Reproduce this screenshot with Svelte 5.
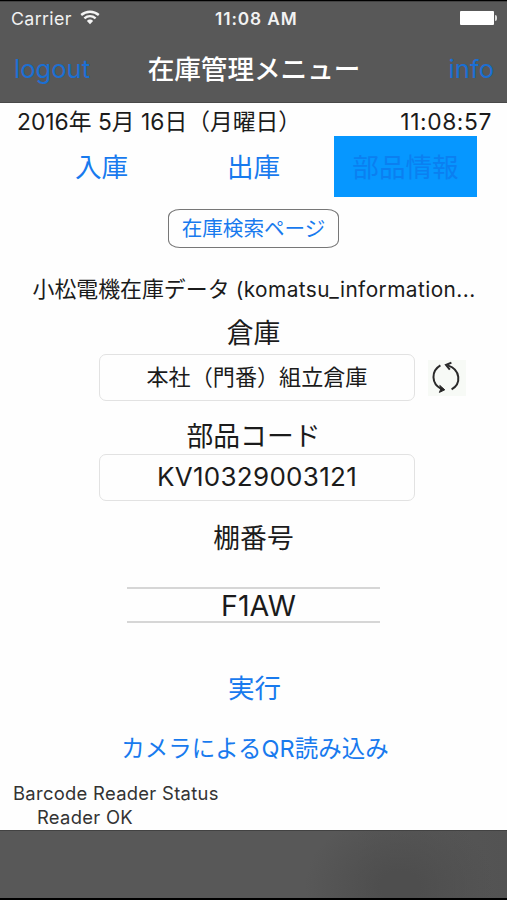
<script lang="ts">
	type Tab = { id: string; label: string };

	const tabs: Tab[] = [
		{ id: 'in', label: '入庫' },
		{ id: 'out', label: '出庫' },
		{ id: 'parts', label: '部品情報' }
	];

	let activeTab = 'parts';
	let partCode = 'KV10329003121';
	let shelf = 'F1AW';
</script>

<div class="screen">
	<header>
		<div class="status-bar">
			<span class="carrier">Carrier</span>
			<svg class="wifi" viewBox="0 0 20 15" width="20" height="15">
				<path d="M1.2 5 C6.3 0.6 13.7 0.6 18.8 5" />
				<path d="M4.4 8.4 C7.8 5.5 12.2 5.5 15.6 8.4" />
				<path class="dot" d="M6.9 11 C8.7 9.1 11.3 9.1 13.1 11 L10 14.2 Z" />
			</svg>
			<span class="clock">11:08 AM</span>
			<span class="battery"></span>
		</div>
		<nav>
			<button class="nav-item logout">logout</button>
			<h1>在庫管理メニュー</h1>
			<button class="nav-item info">info</button>
		</nav>
	</header>

	<main>
		<div class="datetime">
			<span class="date">2016年 5月 16日（月曜日）</span>
			<span class="time">11:08:57</span>
		</div>

		<div class="tabs">
			{#each tabs as tab}
				<button class="tab {tab.id}" class:active={activeTab === tab.id} on:click={() => (activeTab = tab.id)}>
					{tab.label}
				</button>
			{/each}
		</div>

		<button class="search">在庫検索ページ</button>

		<div class="source">小松電機在庫データ <span>(komatsu_information...</span></div>

		<div class="label warehouse-label">倉庫</div>
		<div class="warehouse">
			<div class="field">本社（門番）組立倉庫</div>
			<button class="refresh" aria-label="更新">
				<svg viewBox="0 0 38 36" width="38" height="36">
					<path d="M12.4 5.4 C3 11 3 23.5 13.4 29" />
					<path d="M23.6 29.4 C33.4 24 32.8 9.6 19.8 5.4" />
					<path class="arrow" d="M23.4 2.6 L18 5 L21.8 9.6" />
					<path class="head" d="M16.8 29.8 L11.4 32.4 L12.8 29 L11.8 25.4 Z" />
				</svg>
			</button>
		</div>

		<div class="label code-label">部品コード</div>
		<div class="field code">{partCode}</div>

		<div class="label shelf-label">棚番号</div>
		<div class="picker">{shelf}</div>

		<button class="run">実行</button>
		<button class="camera">カメラによる<span>QR</span>読み込み</button>

		<div class="reader">
			<div>Barcode Reader Status</div>
			<div class="reader-state">Reader OK</div>
		</div>
	</main>

	<footer></footer>
</div>

<style>
	:global(body) {
		margin: 0;
		background: #000;
	}

	.screen {
		width: 507px;
		height: 900px;
		box-sizing: border-box;
		padding-top: 1px;
		display: flex;
		flex-direction: column;
		overflow: hidden;
		background: #000;
		color: #1b1b1b;
		font-family: Inter, 'Noto Sans CJK JP', sans-serif;
		white-space: nowrap;
	}

	button {
		display: block;
		margin: 0;
		padding: 0;
		border: none;
		background: none;
		font-family: inherit;
		color: #187aee;
		white-space: nowrap;
	}

	header {
		flex: none;
		height: 102px;
		box-sizing: border-box;
		background: #585858;
		border-top: 1px solid #424242;
		border-bottom: 1px solid #484848;
	}

	.status-bar {
		display: flex;
		align-items: center;
		height: 33px;
		padding: 0 9px 0 11px;
		color: #f2f2f2;
	}

	.carrier {
		width: 69px;
		font-size: 17.8px;
		letter-spacing: 0.35px;
	}

	.wifi {
		margin-top: -2px;
	}

	.wifi path {
		fill: none;
		stroke: #f4f4f4;
		stroke-width: 2.4;
	}

	.wifi .dot {
		fill: #f4f4f4;
		stroke: none;
	}

	.clock {
		flex: 1;
		margin-left: 115px;
		font-size: 17.3px;
		font-weight: 600;
		letter-spacing: 0.9px;
	}

	.battery {
		position: relative;
		width: 34px;
		height: 14px;
		margin-top: -2px;
		margin-right: 4px;
		background: #fff;
		border-radius: 1px;
	}

	.battery::after {
		content: '';
		position: absolute;
		left: 35px;
		top: 4px;
		width: 2px;
		height: 6px;
		border-radius: 0 2px 2px 0;
		background: #ddd;
	}

	nav {
		display: grid;
		grid-template-columns: 110px 1fr 110px;
		align-items: center;
		height: 67px;
		padding: 0 13px 0 14px;
	}

	.nav-item {
		font-size: 25.6px;
		line-height: 68px;
		color: #1b6fd3;
	}

	.logout {
		text-align: left;
	}

	.info {
		text-align: right;
	}

	h1 {
		margin: 0;
		text-align: center;
		font-size: 26.6px;
		font-weight: 500;
		line-height: 66px;
		color: #fff;
	}

	main {
		flex: none;
		height: 727px;
		display: flex;
		flex-direction: column;
		align-items: center;
		background: #fefefe;
	}

	.datetime {
		align-self: stretch;
		display: flex;
		justify-content: space-between;
		height: 33px;
		padding: 0 16px 0 17px;
		font-size: 22.8px;
		line-height: 38px;
	}

	.time {
		letter-spacing: 0.6px;
		margin-right: -1px;
	}

	.tabs {
		align-self: stretch;
		display: flex;
		height: 61px;
		padding-left: 30px;
	}

	.tab {
		width: 143px;
		margin-right: 9px;
		font-size: 26.6px;
		line-height: 63px;
	}

	.tab.parts {
		margin-right: 0;
	}

	.active {
		background: #0697ff;
		color: #0b7ff0;
	}

	.search {
		width: 171px;
		height: 39px;
		margin-top: 12px;
		border: 1px solid #777;
		border-radius: 12px / 8px;
		font-size: 20.6px;
		line-height: 37px;
	}

	.source {
		width: 442px;
		height: 40px;
		margin-top: 22px;
		font-size: 21.9px;
		line-height: 38px;
	}

	.source span {
		font-size: 20.8px;
		letter-spacing: 0.44px;
	}

	.label {
		font-size: 26.8px;
		line-height: 40px;
		height: 38px;
	}

	.warehouse-label {
		margin-top: 3px;
	}

	.field {
		width: 316px;
		height: 47px;
		box-sizing: border-box;
		border: 1.5px solid #e2e2e2;
		border-radius: 7px;
		text-align: center;
		font-size: 22.1px;
		line-height: 45px;
	}

	.warehouse {
		align-self: stretch;
		display: flex;
		align-items: center;
		gap: 13px;
		padding-left: 99px;
		margin-top: 3px;
	}

	.refresh {
		width: 38px;
		height: 36px;
		background: #f7faf6;
	}

	.refresh svg {
		display: block;
	}

	.refresh path {
		fill: none;
		stroke: #2a2a2a;
		stroke-width: 2;
	}

	.refresh .head {
		fill: #222;
		stroke-width: 1;
	}

	.code-label {
		margin-top: 15px;
	}

	.field.code {
		align-self: flex-start;
		margin-left: 99px;
		font-size: 26px;
		line-height: 43px;
		letter-spacing: 0.3px;
	}

	.shelf-label {
		margin-top: 17px;
	}

	.picker {
		width: 253px;
		height: 36px;
		box-sizing: border-box;
		margin-top: 31px;
		padding-left: 10px;
		border-top: 2px solid #d6d6d6;
		border-bottom: 2px solid #d6d6d6;
		text-align: center;
		font-size: 28.6px;
		line-height: 34px;
	}

	.run {
		height: 40px;
		margin-top: 45px;
		padding-left: 2px;
		font-size: 26.5px;
		line-height: 40px;
	}

	.camera {
		height: 36px;
		margin-top: 22px;
		padding-left: 3px;
		font-size: 23.5px;
		line-height: 38px;
	}

	.reader {
		align-self: stretch;
		margin-top: 15px;
		padding-left: 13px;
		font-size: 18.4px;
		line-height: 24px;
		letter-spacing: 0.3px;
		color: #333;
	}

	.reader-state {
		padding-left: 24px;
	}

	footer {
		flex: none;
		height: 68px;
		box-sizing: border-box;
		border-top: 1px solid #424242;
		background: radial-gradient(ellipse 95px 75px at 400px 55px, #4e4e4e 20%, transparent 100%), linear-gradient(90deg, #585858 70%, #535353);
	}
</style>
